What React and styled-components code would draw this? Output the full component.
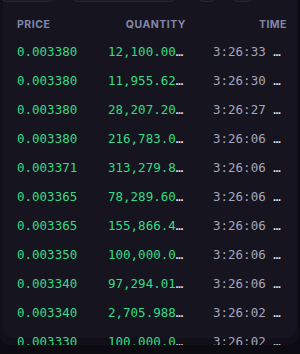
import React from "react";
import styled, { createGlobalStyle } from "styled-components";

const GlobalStyle = createGlobalStyle`
  html, body {
    margin: 0;
    padding: 0;
    background: #0c0b11;
    overflow: hidden;
  }
`;

const trades = [
  { price: "0.003380", qty: "12,100.000000", time: "3:26:33 PM" },
  { price: "0.003380", qty: "11,955.620000", time: "3:26:30 PM" },
  { price: "0.003380", qty: "28,207.200000", time: "3:26:27 PM" },
  { price: "0.003380", qty: "216,783.000000", time: "3:26:06 PM" },
  { price: "0.003371", qty: "313,279.800000", time: "3:26:06 PM" },
  { price: "0.003365", qty: "78,289.600000", time: "3:26:06 PM" },
  { price: "0.003365", qty: "155,866.400000", time: "3:26:06 PM" },
  { price: "0.003350", qty: "100,000.000000", time: "3:26:06 PM" },
  { price: "0.003340", qty: "97,294.010000", time: "3:26:06 PM" },
  { price: "0.003340", qty: "2,705.988000", time: "3:26:02 PM" },
  { price: "0.003330", qty: "100,000.000000", time: "3:26:02 PM" },
];

export default function App() {
  return (
    <>
      <GlobalStyle />
      <Panel>
        <Card>
          <Toolbar>
            <Tab w={57} />
            <Tab w={108} />
            <Tab w={22} />
            <Tab w={25} />
          </Toolbar>
          <HeaderRow>
            <HeadCell>Price</HeadCell>
            <HeadCell align="right">Quantity</HeadCell>
            <HeadCell align="right">Time</HeadCell>
          </HeaderRow>
          {trades.map((t, idx) => (
            <Row key={idx}>
              <Cell>
                <Green>{t.price}</Green>
              </Cell>
              <Cell w={78}>
                <Green>{t.qty}</Green>
              </Cell>
              <Cell w={74}>
                <Gray>{t.time}</Gray>
              </Cell>
            </Row>
          ))}
        </Card>
      </Panel>
    </>
  );
}

const Panel = styled.div`
  width: 299px;
  height: 345px;
  overflow: hidden;
  background: #110f18;
  border-radius: 0 0 10px 10px;
`;

const Card = styled.div`
  margin: -38px 2px 0 3px;
  height: 376px;
  padding-top: 10px;
  box-sizing: border-box;
  background: #16141f;
  border-radius: 10px;
`;

const Toolbar = styled.div`
  display: flex;
  gap: 12px;
  height: 30px;
  margin-left: -4px;
  & > :nth-child(2) {
    margin-left: 2px;
  }
  & > :nth-child(3) {
    margin-left: 6px;
  }
`;

const Tab = styled.div`
  width: ${(p) => p.w}px;
  height: 30px;
  box-sizing: border-box;
  background: #1a1824;
  border: 1px solid #292735;
  border-radius: 8px;
`;

const HeaderRow = styled.div`
  display: grid;
  grid-template-columns: 91px 78px 101px;
  padding: 16px 0 5px 14px;
`;

const HeadCell = styled.div`
  font-family: Inter, "Liberation Sans", sans-serif;
  font-weight: 700;
  font-size: 10.5px;
  line-height: 14px;
  letter-spacing: 0.5px;
  text-transform: uppercase;
  color: #8087a8;
  text-align: ${(p) => p.align || "left"};
`;

const Row = styled.div`
  display: grid;
  grid-template-columns: 91px 105px 74px;
  padding-left: 14px;
  height: 29px;
`;

const Cell = styled.div`
  font-family: "DejaVu Sans Mono", "Liberation Mono", monospace;
  font-size: 12.5px;
  line-height: 29px;
  color: #ececf2;
  width: ${(p) => (p.w ? `${p.w}px` : "auto")};
  white-space: nowrap;
  overflow: hidden;
  text-overflow: ellipsis;
`;

const Green = styled.span`
  color: #33dc86;
`;

const Gray = styled.span`
  color: #a5a6ba;
`;
